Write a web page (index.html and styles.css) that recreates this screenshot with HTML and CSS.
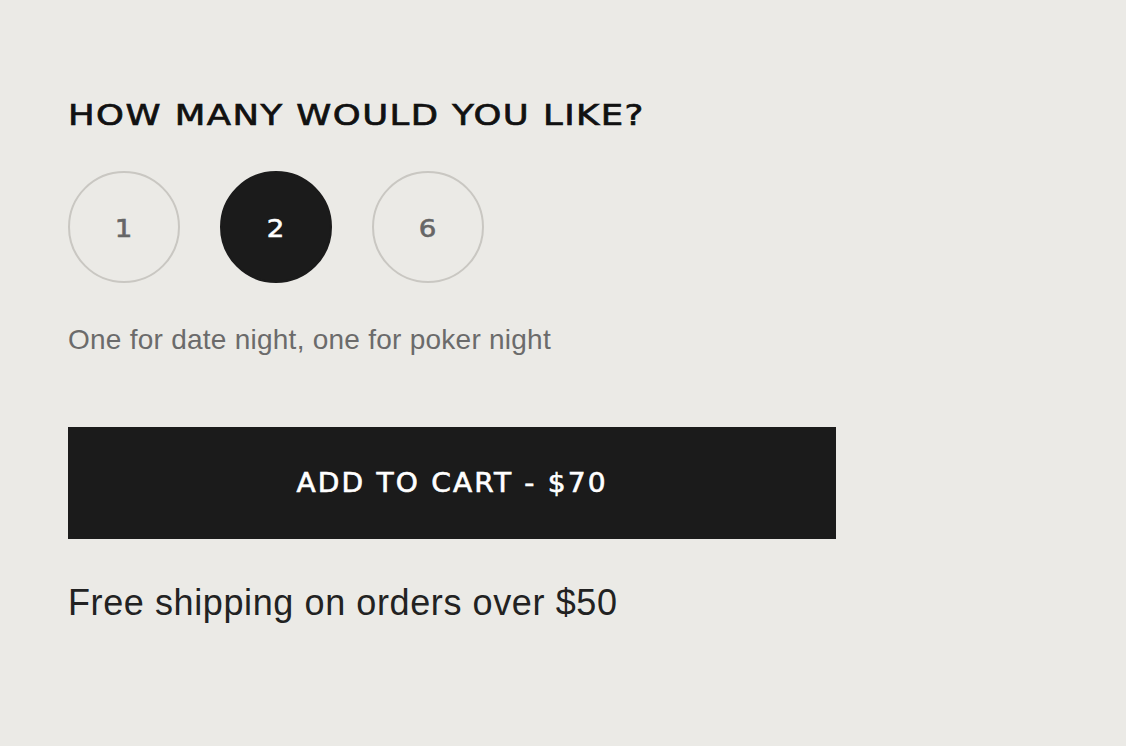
FILE: index.html
```html
<!DOCTYPE html>
<html>
<head>
<meta charset="utf-8">
<link rel="stylesheet" href="styles.css">
</head>
<body>
<main class="panel">
  <h2 class="title"><span class="wide">HOW MANY WOULD YOU LIKE?</span></h2>
  <div class="options">
    <button class="opt"><span class="num">1</span></button>
    <button class="opt opt-active"><span class="num">2</span></button>
    <button class="opt"><span class="num">6</span></button>
  </div>
  <p class="note">One for date night, one for poker night</p>
  <button class="cart"><span class="cart-label">ADD TO CART - $70</span></button>
  <p class="ship">Free shipping on orders over $50</p>
</main>
</body>
</html>
```
FILE: styles.css
```css
html, body {
  margin: 0;
  padding: 0;
  background: #ebeae6;
}
body {
  width: 1126px;
  height: 746px;
  overflow: hidden;
}
.panel {
  padding: 100px 0 0 68px;
  display: flex;
  flex-direction: column;
  align-items: flex-start;
  font-family: "Liberation Sans", Arial, sans-serif;
}
.title {
  margin: 0;
  font-family: "DejaVu Sans", sans-serif;
  font-weight: normal;
  font-size: 29px;
  line-height: 30px;
  letter-spacing: 1.2px;
  color: #111;
  -webkit-text-stroke: 0.7px #111;
  white-space: nowrap;
}
.wide {
  display: inline-block;
  transform: scaleX(1.222);
  transform-origin: left center;
}
.options {
  display: flex;
  gap: 40px;
  margin-top: 41px;
}
.opt {
  width: 112px;
  height: 112px;
  border-radius: 50%;
  border: 2px solid #c9c7c2;
  background: transparent;
  color: #666;
  font-family: "DejaVu Sans", sans-serif;
  font-size: 24px;
  -webkit-text-stroke: 0.6px #666;
  padding: 3px 0 0 0;
  display: flex;
  align-items: center;
  justify-content: center;
}
.num {
  display: inline-block;
  transform: scaleX(1.15);
}
.opt-active {
  background: #1b1b1b;
  border-color: #1b1b1b;
  color: #fff;
  -webkit-text-stroke: 0.6px #fff;
}
.note {
  margin: 42px 0 0 0;
  font-size: 28px;
  line-height: 30px;
  letter-spacing: 0.25px;
  color: #6b6b6b;
}
.cart {
  margin-top: 72px;
  width: 768px;
  height: 112px;
  border: none;
  background: #1b1b1b;
  color: #fff;
  font-family: "DejaVu Sans", sans-serif;
  font-size: 26px;
  letter-spacing: 2px;
  -webkit-text-stroke: 0.6px #fff;
  padding: 0;
}
.cart-label {
  display: inline-block;
  transform: scaleX(1.08);
}
.ship {
  margin: 44px 0 0 0;
  font-size: 36px;
  line-height: 40px;
  letter-spacing: 0.6px;
  color: #222;
}
```
